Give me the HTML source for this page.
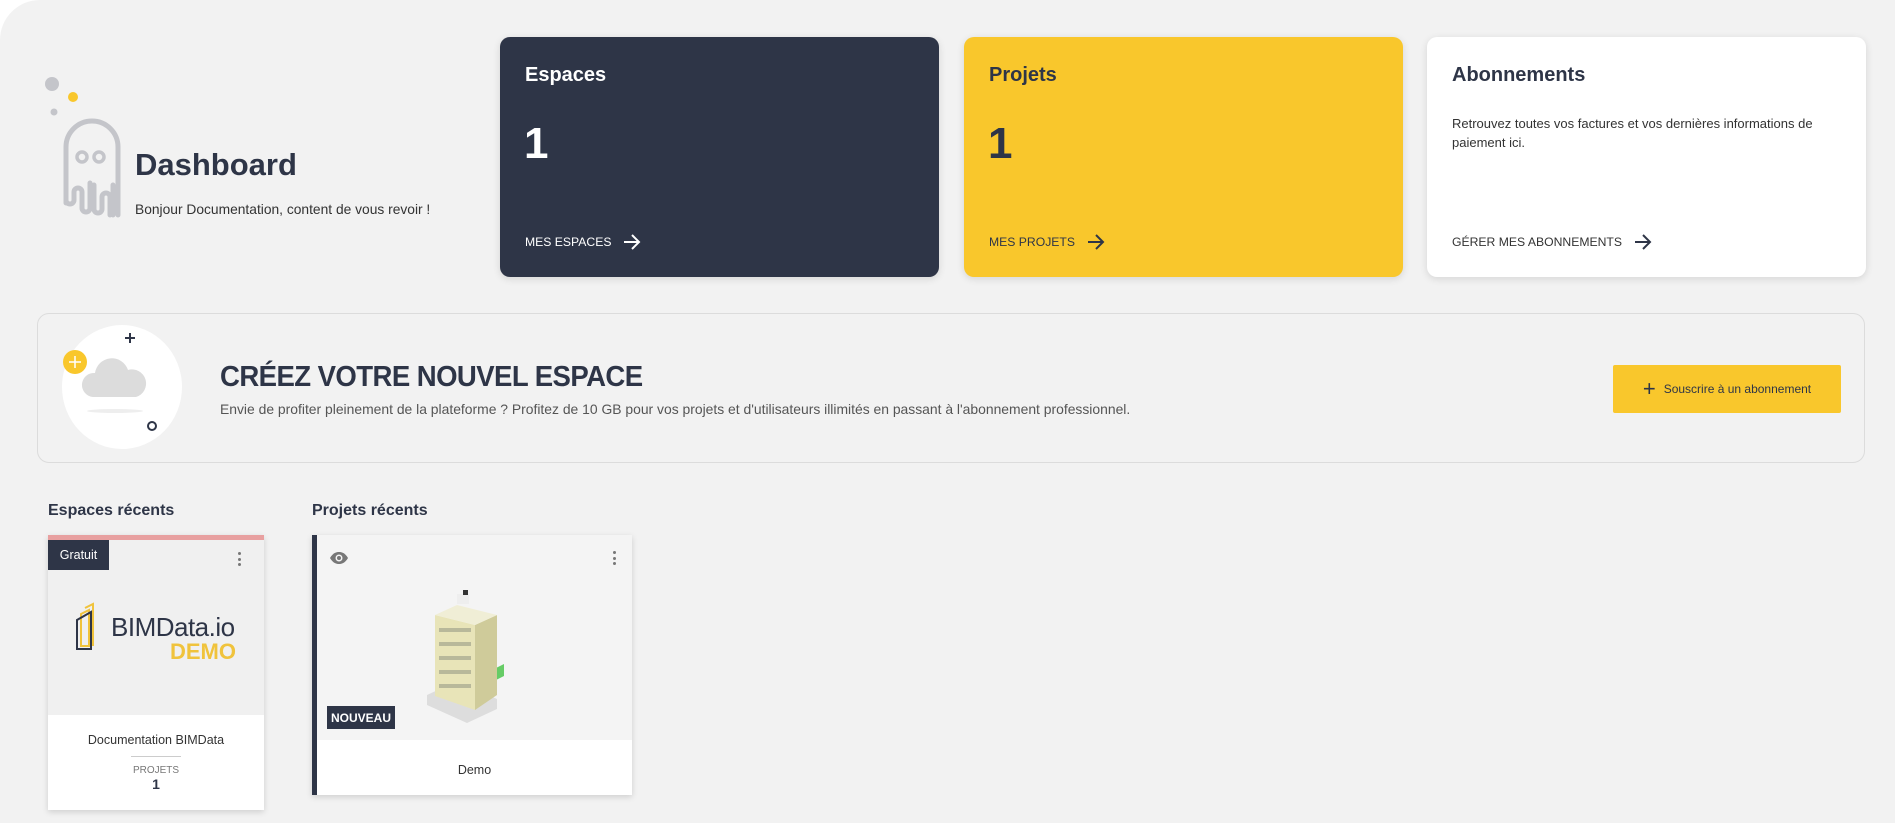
<!DOCTYPE html>
<html><head><meta charset="utf-8"><style>
*{margin:0;padding:0;box-sizing:border-box}
body{width:1895px;height:823px;background:#fff;font-family:"Liberation Sans",sans-serif;color:#2e3547;overflow:hidden;position:relative}
.panel{position:absolute;left:0;top:0;width:1895px;height:823px;background:#f2f2f2;border-radius:40px 0 0 0}
.abs{position:absolute}
.card{position:absolute;top:37px;width:439px;height:240px;border-radius:10px;box-shadow:0 2px 8px rgba(0,0,0,.12)}
.card h3{position:absolute;left:25px;top:27px;font-size:20px;font-weight:bold}
.card .n{position:absolute;left:24px;top:82px;font-size:44px;font-weight:bold}
.card .lk{position:absolute;left:25px;top:197px;font-size:12.2px;display:flex;align-items:center;gap:12px}
</style></head><body>
<div class="panel"></div>
<svg class="abs" style="left:40px;top:75px" width="90" height="150" viewBox="0 0 90 150">
<circle cx="12" cy="9" r="7" fill="#c4c5ca"/>
<circle cx="33" cy="22" r="5" fill="#f9c72c"/>
<circle cx="14" cy="37" r="3.5" fill="#c4c5ca"/>
<path d="M26 128 V72 a26 26 0 0 1 52 0 V140 M73 110 v30 M26 128 v-28 M26 125 a4 4 0 0 0 8 0 v-8 a4 4 0 0 1 8 0 v16 a4 4 0 0 0 8 0 V108 M54 110 v24 a4 4 0 0 0 8 0 v-12 a4 4 0 0 1 8 0 v18" fill="none" stroke="#c4c5ca" stroke-width="5" stroke-linecap="round"/>
<circle cx="42" cy="82" r="5" fill="none" stroke="#c4c5ca" stroke-width="3.5"/>
<circle cx="59" cy="82" r="5" fill="none" stroke="#c4c5ca" stroke-width="3.5"/>
</svg>
<div class="abs" style="left:135px;top:147px;font-size:31px;font-weight:bold">Dashboard</div>
<div class="abs" style="left:135px;top:202px;font-size:13.8px;color:#333">Bonjour Documentation, content de vous revoir !</div>

<div class="card" style="left:500px;background:#2e3547;color:#fff">
<h3>Espaces</h3><div class="n">1</div>
<div class="lk">MES ESPACES <svg width="18" height="16" viewBox="0 0 18 16"><path d="M1 8h15M9 1l7 7-7 7" fill="none" stroke="#fff" stroke-width="2"/></svg></div></div>
<div class="card" style="left:964px;background:#f9c72c;color:#2e3547">
<h3>Projets</h3><div class="n">1</div>
<div class="lk">MES PROJETS <svg width="18" height="16" viewBox="0 0 18 16"><path d="M1 8h15M9 1l7 7-7 7" fill="none" stroke="#2e3547" stroke-width="2"/></svg></div></div>
<div class="card" style="left:1427px;background:#fff;color:#2e3547">
<h3>Abonnements</h3>
<div class="abs" style="left:25px;top:77px;font-size:13px;line-height:19px;color:#333;width:400px">Retrouvez toutes vos factures et vos dernières informations de paiement ici.</div>
<div class="lk" style="color:#333">GÉRER MES ABONNEMENTS <svg width="18" height="16" viewBox="0 0 18 16"><path d="M1 8h15M9 1l7 7-7 7" fill="none" stroke="#2e3547" stroke-width="2"/></svg></div></div>

<div class="abs" style="left:37px;top:313px;width:1828px;height:150px;border:1px solid #dcdcdc;border-radius:12px"></div>
<svg class="abs" style="left:55px;top:325px" width="135" height="125" viewBox="0 0 135 125">
<ellipse cx="67" cy="62" rx="60" ry="62" fill="#fff"/>
<path d="M38 72 a12 12 0 0 1 2-24 a17 17 0 0 1 33-3 a12 12 0 0 1 8 27z" fill="#dcdcdc"/>
<ellipse cx="60" cy="86" rx="28" ry="2" fill="#eee"/>
<circle cx="20" cy="37" r="12" fill="#f9c72c"/>
<path d="M20 31v12M14 37h12" stroke="#fff" stroke-width="1.5"/>
<path d="M75 8v10M70 13h10" stroke="#2e3547" stroke-width="2"/>
<circle cx="97" cy="101" r="4" fill="none" stroke="#2e3547" stroke-width="2"/>
</svg>
<div class="abs" style="left:220px;top:361px;font-size:29px;font-weight:bold;letter-spacing:-0.6px;transform:scaleX(.95);transform-origin:left">CRÉEZ VOTRE NOUVEL ESPACE</div>
<div class="abs" style="left:220px;top:401px;font-size:13.9px;color:#555">Envie de profiter pleinement de la plateforme ? Profitez de 10 GB pour vos projets et d'utilisateurs illimités en passant à l'abonnement professionnel.</div>
<div class="abs" style="left:1613px;top:365px;width:228px;height:48px;background:#f9c72c;border-radius:2px;display:flex;align-items:center;justify-content:center;gap:8px;font-size:12px;color:#2e3547"><span style="font-size:22px;line-height:1">+</span> Souscrire à un abonnement</div>

<div class="abs" style="left:48px;top:502px;font-size:16px;font-weight:bold">Espaces récents</div>
<div class="abs" style="left:312px;top:502px;font-size:16px;font-weight:bold">Projets récents</div>

<div class="abs" style="left:48px;top:535px;width:216px;height:275px;background:#fff;box-shadow:0 2px 6px rgba(0,0,0,.15)">
<div style="height:180px;background:#f0f0f0;border-top:5px solid #e8a0a0;position:relative">
<div class="abs" style="left:0;top:0;width:61px;height:30px;background:#2e3547;color:#fff;font-size:12.5px;display:flex;align-items:center;justify-content:center">Gratuit</div>
<div class="abs" style="left:190px;top:12px;width:4px"><div style="width:3px;height:3px;background:#777;border-radius:2px;margin-bottom:2.5px"></div><div style="width:3px;height:3px;background:#777;border-radius:2px;margin-bottom:2.5px"></div><div style="width:3px;height:3px;background:#777;border-radius:2px"></div></div>
<svg class="abs" style="left:26px;top:62px" width="30" height="52" viewBox="0 0 30 52"><path d="M7 44V12l8-4v36zM11 6l8-4v42" fill="none" stroke="#f0c33c" stroke-width="2"/><path d="M3 47V18l14-8v37z" fill="none" stroke="#2e3547" stroke-width="2"/></svg>
<div class="abs" style="left:63px;top:72px;font-size:26px;color:#2e3547;letter-spacing:-.5px">BIMData.io</div>
<div class="abs" style="left:122px;top:99px;font-size:22px;font-weight:bold;color:#f0c33c">DEMO</div>
</div>
<div style="text-align:center;font-size:12.5px;color:#333;margin-top:18px">Documentation BIMData</div>
<div style="width:50px;height:1px;background:#ccc;margin:9px auto 8px"></div>
<div style="text-align:center;font-size:10px;color:#777">PROJETS</div>
<div style="text-align:center;font-size:14px;font-weight:bold;color:#2e3547">1</div>
</div>

<div class="abs" style="left:312px;top:535px;width:320px;height:260px;background:#fff;border-left:5px solid #2e3547;box-shadow:0 2px 6px rgba(0,0,0,.15)">
<div style="height:205px;background:#f4f4f4;position:relative">
<svg class="abs" style="left:12px;top:16px" width="20" height="14" viewBox="0 0 20 14"><path d="M1 7C4 2 7 1 10 1s6 1 9 6c-3 5-6 6-9 6s-6-1-9-6z" fill="#777"/><circle cx="10" cy="7" r="3.5" fill="#f4f4f4"/><circle cx="10" cy="7" r="2" fill="#777"/></svg>
<div class="abs" style="left:296px;top:16px;width:4px"><div style="width:3px;height:3px;background:#777;border-radius:2px;margin-bottom:2.5px"></div><div style="width:3px;height:3px;background:#777;border-radius:2px;margin-bottom:2.5px"></div><div style="width:3px;height:3px;background:#777;border-radius:2px"></div></div>
<svg class="abs" style="left:100px;top:55px" width="110" height="135" viewBox="0 0 110 135">
<path d="M10 115l40 18 30-14v-10l-40-18-30 14z" fill="#ddd"/>
<path d="M75 80l12-6v12l-12 6z" fill="#6c6"/>
<path d="M18 25l40 10v85l-40-14z" fill="#e8e4b8"/>
<path d="M58 35l22-10v80l-22 15z" fill="#cfcb9a"/>
<path d="M18 25l22-10 40 10-22 10z" fill="#f0eed6"/>
<g fill="#b8b89a">
<rect x="22" y="38" width="32" height="4"/><rect x="22" y="52" width="32" height="4"/><rect x="22" y="66" width="32" height="4"/><rect x="22" y="80" width="32" height="4"/><rect x="22" y="94" width="32" height="4"/></g>
<rect x="40" y="4" width="12" height="10" fill="#eee"/><rect x="46" y="0" width="5" height="5" fill="#333"/>
</svg>
<div class="abs" style="left:10px;top:171px;width:68px;height:23px;background:#2e3547;color:#fff;font-size:12px;font-weight:bold;display:flex;align-items:center;justify-content:center">NOUVEAU</div>
</div>
<div style="text-align:center;font-size:12.5px;color:#333;margin-top:23px">Demo</div>
</div>
</body></html>
